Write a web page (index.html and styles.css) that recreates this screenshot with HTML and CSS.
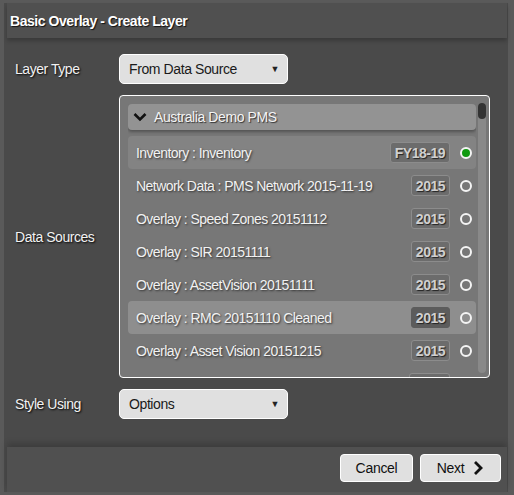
FILE: index.html
```html
<!DOCTYPE html>
<html>
<head>
<meta charset="utf-8">
<link rel="stylesheet" href="styles.css">
</head>
<body>
<div class="dialog">
  <div class="header">Basic Overlay - Create Layer</div>
  <div class="content">
    <div class="field">
      <div class="label">Layer Type</div>
      <div class="select"><span>From Data Source</span><span class="caret">▼</span></div>
    </div>
    <div class="field">
      <div class="label">Data Sources</div>
      <div class="listbox">
        <div class="list">
          <div class="group">
            <svg class="chev" width="14" height="10" viewBox="0 0 14 10"><path d="M1.5 2 L7 7.5 L12.5 2" fill="none" stroke="#111" stroke-width="2.6"/></svg>
            <span>Australia Demo PMS</span>
          </div>
          <div class="rows">
            <div class="row hover"><span class="name">Inventory : Inventory</span><span class="badge">FY18-19</span><span class="radio on"></span></div>
            <div class="row"><span class="name">Network Data : PMS Network 2015-11-19</span><span class="badge">2015</span><span class="radio"></span></div>
            <div class="row"><span class="name">Overlay : Speed Zones 20151112</span><span class="badge">2015</span><span class="radio"></span></div>
            <div class="row"><span class="name">Overlay : SIR 20151111</span><span class="badge">2015</span><span class="radio"></span></div>
            <div class="row"><span class="name">Overlay : AssetVision 20151111</span><span class="badge">2015</span><span class="radio"></span></div>
            <div class="row sel"><span class="name">Overlay : RMC 20151110 Cleaned</span><span class="badge">2015</span><span class="radio"></span></div>
            <div class="row"><span class="name">Overlay : Asset Vision 20151215</span><span class="badge">2015</span><span class="radio"></span></div>
            <div class="row peek"><span class="name"></span><span class="badge empty"></span><span class="radio"></span></div>
          </div>
        </div>
        <div class="scrolltrack"><div class="thumb"></div></div>
      </div>
    </div>
    <div class="field">
      <div class="label">Style Using</div>
      <div class="select"><span>Options</span><span class="caret">▼</span></div>
    </div>
  </div>
  <div class="footer">
    <div class="btn cancel">Cancel</div>
    <div class="btn next">Next <svg width="12" height="16" viewBox="0 0 12 16"><path d="M3 2 L9 8 L3 14" fill="none" stroke="#111" stroke-width="2.8"/></svg></div>
  </div>
</div>
</body>
</html>
```
FILE: styles.css
```css
html, body {
  margin: 0;
  padding: 0;
  background: #5a5a5a;
  width: 514px;
  height: 495px;
  overflow: hidden;
  font-family: "Liberation Sans", Arial, sans-serif;
  font-size: 14px;
}
.dialog {
  margin: 3px 6px 0 4px;
  height: 489px;
  background: #4a4a4a;
  display: flex;
  flex-direction: column;
}
.header {
  margin: 0 1px 0 3px;
  height: 35px;
  box-sizing: border-box;
  padding-left: 3px;
  display: flex;
  align-items: center;
  background: #505050;
  color: #fff;
  font-weight: bold;
  letter-spacing: -0.45px;
  text-shadow: 1px 1px 1px #111;
  box-shadow: 0 3px 4px rgba(0,0,0,0.22);
}
.content {
  padding: 16px 0 0 11px;
  display: flex;
  flex-direction: column;
  gap: 11px;
}
.field {
  display: flex;
  align-items: center;
}
.label {
  width: 104px;
  color: #f2f2f2;
  text-shadow: 1px 1px 2px #000;
  letter-spacing: -0.45px;
}
.select {
  width: 169px;
  height: 30px;
  box-sizing: border-box;
  border: 1px solid #fff;
  border-radius: 5px;
  background: #e0e0e0;
  color: #1a1a1a;
  display: flex;
  align-items: center;
  justify-content: space-between;
  padding: 0 8px 0 9px;
  letter-spacing: -0.4px;
}
.caret {
  font-size: 9px;
  color: #222;
}
.listbox {
  width: 371px;
  height: 283px;
  box-sizing: border-box;
  border: 1px solid #fff;
  border-radius: 4px;
  background: #777;
  display: flex;
  padding: 8px 3px 0 8px;
  gap: 2px;
  overflow: hidden;
}
.list {
  width: 348px;
  overflow: hidden;
}
.group {
  height: 26px;
  background: #939393;
  border-radius: 4px;
  display: flex;
  align-items: center;
  padding-left: 5px;
  gap: 7px;
  color: #f4f4f4;
  text-shadow: 1px 1px 1px #333;
  letter-spacing: -0.4px;
  box-shadow: 0 2px 3px rgba(0,0,0,0.3);
}
.rows {
  margin-top: 6px;
}
.row {
  height: 33px;
  display: flex;
  align-items: center;
  padding: 0 4px 0 8px;
  border-radius: 4px;
  color: #f2f2f2;
  text-shadow: 1px 1px 2px #333;
  letter-spacing: -0.55px;
}
.row.hover { background: #838383; }
.row.sel { background: #8e8e8e; }
.name { flex: 1; }
.badge {
  height: 21px;
  box-sizing: border-box;
  border: 1px solid #8c8c8c;
  border-radius: 3px;
  background: #6c6c6c;
  color: #d0d0d0;
  font-weight: bold;
  display: flex;
  align-items: center;
  padding: 0 4px;
  letter-spacing: -0.5px;
  text-shadow: 1px 1px 1px #222;
}
.badge.empty { width: 41px; }
.row.sel .badge {
  background: #5c5c5c;
  border-color: #5c5c5c;
}
.radio {
  width: 12px;
  height: 12px;
  box-sizing: border-box;
  border: 2px solid #f4f4f4;
  border-radius: 50%;
  margin-left: 10px;
}
.radio.on {
  background: #109a10;
}
.scrolltrack {
  width: 8px;
  height: 270px;
  margin-top: -1px;
  background: #898989;
  border-radius: 4px;
}
.thumb {
  height: 16px;
  background: #333;
  border-radius: 4px;
}
.footer {
  margin: auto 1px 0 3px;
  height: 45px;
  box-sizing: border-box;
  background: #505050;
  box-shadow: 0 -4px 6px rgba(0,0,0,0.18);
  display: flex;
  justify-content: flex-end;
  align-items: flex-start;
  padding: 7px 6px 0 0;
  gap: 7px;
}
.btn {
  height: 28px;
  box-sizing: border-box;
  border: 1px solid #fff;
  border-radius: 4px;
  background: #e0e0e0;
  color: #111;
  display: flex;
  align-items: center;
  justify-content: center;
  gap: 8px;
  letter-spacing: -0.3px;
}
.cancel { width: 73px; }
.next { width: 81px; }
```
